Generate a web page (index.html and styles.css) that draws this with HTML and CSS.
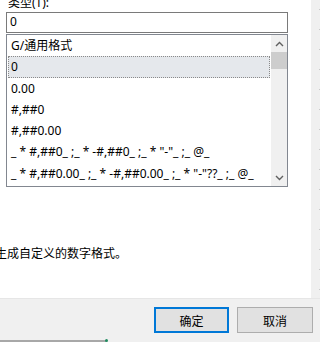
FILE: index.html
```html
<!DOCTYPE html>
<html>
<head>
<meta charset="utf-8">
<link rel="stylesheet" href="styles.css">
</head>
<body>
<div class="top">
  <div class="panel">
    <div class="label">类型(T):</div>
    <div class="input">0</div>
    <div class="list">
      <div class="rows">
        <div class="row">G/通用格式</div>
        <div class="row selected">0</div>
        <div class="row">0.00</div>
        <div class="row">#,##0</div>
        <div class="row">#,##0.00</div>
        <div class="row">_ * #,##0_ ;_ * -#,##0_ ;_ * "-"_ ;_ @_</div>
        <div class="row">_ * #,##0.00_ ;_ * -#,##0.00_ ;_ * "-"??_ ;_ @_</div>
      </div>
      <div class="scrollbar">
        <div class="arrow">
          <svg width="9" height="6" viewBox="0 0 9 6"><path d="M1 5 L4.5 1.5 L8 5" fill="none" stroke="#606060" stroke-width="1.4"/></svg>
        </div>
        <div class="thumb"></div>
        <div class="track"></div>
        <div class="arrow">
          <svg width="9" height="6" viewBox="0 0 9 6"><path d="M1 1 L4.5 4.5 L8 1" fill="none" stroke="#606060" stroke-width="1.4"/></svg>
        </div>
      </div>
    </div>
    <div class="desc">生成自定义的数字格式。</div>
  </div>
  <div class="strip"></div>
</div>
<div class="footer">
  <button class="btn primary">确定</button>
  <button class="btn">取消</button>
</div>
<div class="bottomline"><span class="dot"></span></div>
</body>
</html>
```
FILE: styles.css
```css
html, body {
  margin: 0;
  padding: 0;
}
body {
  width: 320px;
  height: 342px;
  overflow: hidden;
  background: #f0f0f0;
  font-family: "Noto Sans", "Noto Sans CJK SC", sans-serif;
  font-size: 12px;
  color: #000;
  position: relative;
}
.top {
  display: flex;
  height: 298px;
}
.panel {
  width: 311px;
  background: #fff;
  padding-left: 6px;
  box-sizing: border-box;
}
.strip {
  flex: 1;
  background: #f0f0f0;
  background-image: repeating-linear-gradient(to bottom, transparent 0, transparent 9px, #c8c8c8 9px, #c8c8c8 10px, transparent 10px, transparent 20px);
  background-size: 1px 100%;
  background-position: right top;
  background-repeat: no-repeat;
}
.label {
  height: 16px;
  line-height: 16px;
  margin-top: -5px;
  padding-left: 2px;
}
.input {
  margin-top: 1px;
  width: 282px;
  height: 21px;
  box-sizing: border-box;
  border: 1px solid #7a7a7a;
  line-height: 18px;
  padding-left: 3px;
}
.list {
  margin-top: 1px;
  width: 282px;
  height: 153px;
  box-sizing: border-box;
  border: 1px solid #828790;
  display: flex;
}
.rows {
  flex: 1;
  padding-left: 1px;
  padding-right: 1px;
  overflow: hidden;
}
.row {
  height: 21.3px;
  line-height: 21.3px;
  padding-left: 3px;
  white-space: pre;
  box-sizing: border-box;
}
.row.selected {
  background: #e5e8ec;
  border: 1px dotted #8a8a8a;
  line-height: 19.3px;
  padding-left: 2px;
}
.scrollbar {
  width: 16px;
  background: #f0f0f0;
  display: flex;
  flex-direction: column;
}
.arrow {
  height: 17px;
  display: flex;
  align-items: center;
  justify-content: center;
}
.thumb {
  height: 17px;
  background: #cdcdcd;
}
.track {
  flex: 1;
}
.desc {
  margin-top: 59px;
  margin-left: -11px;
  line-height: 16px;
  white-space: nowrap;
}
.footer {
  height: 44px;
  box-sizing: border-box;
  border-top: 1px solid #e6e6e6;
  padding-top: 8px;
  padding-right: 7px;
  display: flex;
  justify-content: flex-end;
  gap: 8px;
}
.btn {
  width: 76px;
  height: 26px;
  box-sizing: border-box;
  border: 1px solid #adadad;
  background: #e1e1e1;
  font-family: "Noto Sans CJK SC", sans-serif;
  font-size: 12px;
  color: #000;
  padding: 0;
  margin: 0;
}
.btn.primary {
  width: 75px;
  border: 2px solid #0078d7;
}
.bottomline {
  position: absolute;
  left: 0;
  bottom: 0;
  width: 106px;
  height: 2px;
  background: #a8a8a8;
}
.dot {
  position: absolute;
  right: -2px;
  top: -1px;
  width: 3px;
  height: 3px;
  border-radius: 50%;
  background: #1f8a5f;
}
```
